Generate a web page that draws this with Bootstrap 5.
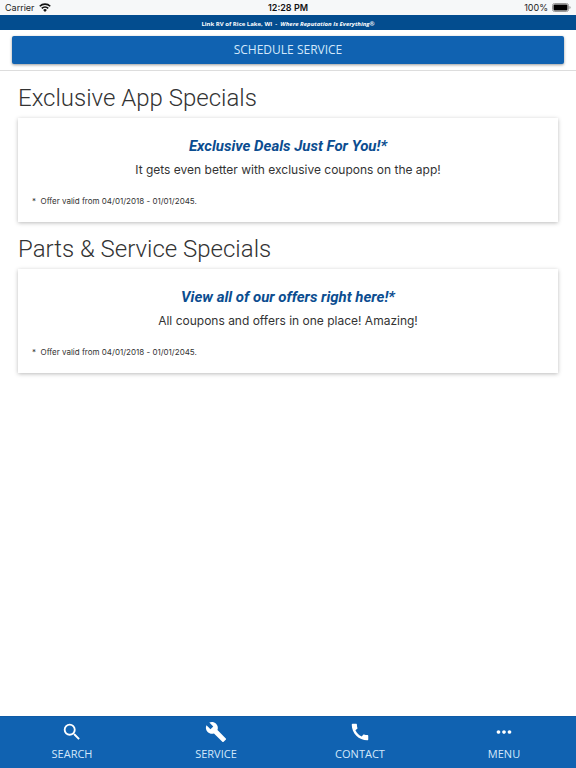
<!DOCTYPE html>
<html lang="en">
<head>
<meta charset="utf-8">
<meta name="viewport" content="width=device-width, initial-scale=1">
<title>Link RV of Rice Lake, WI</title>
<link href="https://cdn.jsdelivr.net/npm/bootstrap@5.3.0/dist/css/bootstrap.min.css" rel="stylesheet">
<style>
  body { font-family: Inter, sans-serif; color: #333; background: #fff; }
  .status-bar { background: #f6f8f9; color: #222; font-size: 9px; line-height: 15px; padding: 0 5px; }
  .status-time { font-size: 9px; color: #111; }
  .dealer-bar { background: #034d8f; color: #fff; font: 700 6px/12px "Open Sans", sans-serif; padding-top: 3px; }
  .action-bar { padding: 6px 12px; border-bottom: 1px solid #ddd; }
  .btn-schedule, .btn-schedule:hover { background: #1062b1; color: #d3e8fb; border: 0; border-radius: 2px; font: 400 12px/28px "Open Sans", sans-serif; padding: 0; box-shadow: 0 1px 3px rgba(0,0,0,.4); }
  .specials { padding: 11px 18px; }
  .section-title { font: 300 24px/32px Roboto, sans-serif; color: #333; margin: 0 0 4px; }
  .offer { background: #fff; min-height: 104px; padding: 18px 14px 14px; margin-bottom: 11px; box-shadow: 0 1px 4px rgba(0,0,0,.27); }
  .offer-title { font: italic 700 15px/20px Roboto, sans-serif; color: #0b4d90; margin: 0 0 4px; }
  .offer-text { font-size: 12px; line-height: 19px; margin: 0 0 16px; }
  .offer-note { font-size: 8px; line-height: 12px; margin: 0; }
  .tab-bar { background: #1062b1; border-top: 1px solid #0f5ba5; padding: 4px 0 5px; }
  .tab-link { color: #d3e8fb; font: 400 11px/18px "Open Sans", sans-serif; gap: 2px; }
  .tab-link svg { fill: #fff; }
</style>
<script src="https://cdn.jsdelivr.net/npm/bootstrap@5.3.0/dist/js/bootstrap.bundle.min.js"></script>
</head>
<body class="d-flex flex-column min-vh-100">
  <header>
    <div class="status-bar row g-0 align-items-center">
      <div class="col d-flex align-items-center gap-1">
        <span>Carrier</span>
        <svg width="12" height="9" viewBox="0 0 24 18" fill="none" stroke="#111" stroke-width="3.2" aria-hidden="true"><path d="M1.5 6.5a15 15 0 0 1 21 0M5.5 10.8a9.3 9.3 0 0 1 13 0"/><path d="M8.2 14a5.5 5.5 0 0 1 7.600 0L12 18z" fill="#111" stroke="none"/></svg>
      </div>
      <div class="col-auto status-time fw-semibold">12:28 PM</div>
      <div class="col d-flex align-items-center justify-content-end gap-1">
        <span>100%</span>
        <svg width="19" height="9" viewBox="0 0 19 9" aria-hidden="true"><rect x=".5" y=".5" width="16" height="8" rx="2" fill="#fff" stroke="#999"/><rect x="1.5" y="1.5" width="14" height="6" rx="1" fill="#000"/><path d="M17.5 3v3q1-.4 1-1.5T17.5 3" fill="#888"/></svg>
      </div>
    </div>
    <div class="dealer-bar text-center">Link RV of Rice Lake, WI &nbsp;-&nbsp; <em>Where Reputation Is Everything®</em></div>
    <div class="action-bar"><button type="button" class="btn btn-schedule w-100 d-block">SCHEDULE SERVICE</button></div>
  </header>

  <main class="specials flex-grow-1">
    <section>
      <h2 class="section-title">Exclusive App Specials</h2>
      <article class="offer">
        <h3 class="offer-title text-center">Exclusive Deals Just For You!*</h3>
        <p class="offer-text text-center">It gets even better with exclusive coupons on the app!</p>
        <p class="offer-note">*&nbsp; Offer valid from 04/01/2018 - 01/01/2045.</p>
      </article>
    </section>
    <section>
      <h2 class="section-title">Parts &amp; Service Specials</h2>
      <article class="offer">
        <h3 class="offer-title text-center">View all of our offers right here!*</h3>
        <p class="offer-text text-center">All coupons and offers in one place! Amazing!</p>
        <p class="offer-note">*&nbsp; Offer valid from 04/01/2018 - 01/01/2045.</p>
      </article>
    </section>
  </main>

  <nav class="tab-bar row g-0 sticky-bottom" aria-label="Main">
    <a href="#search" class="tab-link col d-flex flex-column align-items-center text-decoration-none">
      <svg width="22" height="22" viewBox="0 0 24 24" aria-hidden="true"><path d="M15.5 14h-.79l-.28-.27A6.47 6.47 0 0 0 16 9.5 6.5 6.5 0 1 0 9.5 16c1.61 0 3.09-.59 4.23-1.57l.27.28v.79l5 4.99L20.49 19l-4.99-5zm-6 0C7.01 14 5 11.99 5 9.5S7.01 5 9.5 5 14 7.01 14 9.5 11.99 14 9.5 14z"/></svg>
      <span>SEARCH</span>
    </a>
    <a href="#service" class="tab-link col d-flex flex-column align-items-center text-decoration-none">
      <svg width="22" height="22" viewBox="0 0 24 24" aria-hidden="true"><path d="M22.7 19l-9.1-9.1c.9-2.3.4-5-1.5-6.9-2-2-5-2.4-7.4-1.3L9 6 6 9 1.6 4.7C.4 7.1.9 10.1 2.9 12.1c1.9 1.9 4.6 2.4 6.9 1.5l9.1 9.1c.4.4 1 .4 1.4 0l2.3-2.3c.5-.4.5-1.1.1-1.4z"/></svg>
      <span>SERVICE</span>
    </a>
    <a href="#contact" class="tab-link col d-flex flex-column align-items-center text-decoration-none">
      <svg width="22" height="22" viewBox="0 0 24 24" aria-hidden="true"><path d="M20.01 15.38c-1.23 0-2.42-.2-3.53-.56-.35-.12-.74-.03-1.01.24l-1.57 1.97c-2.83-1.35-5.48-3.9-6.89-6.83l1.95-1.66c.27-.28.35-.67.24-1.02-.37-1.11-.56-2.3-.56-3.53 0-.54-.45-.99-.99-.99H4.19C3.65 3 3 3.24 3 3.99 3 13.28 10.73 21 20.01 21c.71 0 .99-.63.99-1.18v-3.45c0-.54-.45-.99-.99-.99z"/></svg>
      <span>CONTACT</span>
    </a>
    <a href="#menu" class="tab-link col d-flex flex-column align-items-center text-decoration-none">
      <svg width="22" height="22" viewBox="0 0 24 24" aria-hidden="true"><path d="M6 10c-1.1 0-2 .9-2 2s.9 2 2 2 2-.9 2-2-.9-2-2-2zm12 0c-1.1 0-2 .9-2 2s.9 2 2 2 2-.9 2-2-.9-2-2-2zm-6 0c-1.1 0-2 .9-2 2s.9 2 2 2 2-.9 2-2-.9-2-2-2z"/></svg>
      <span>MENU</span>
    </a>
  </nav>
</body>
</html>
